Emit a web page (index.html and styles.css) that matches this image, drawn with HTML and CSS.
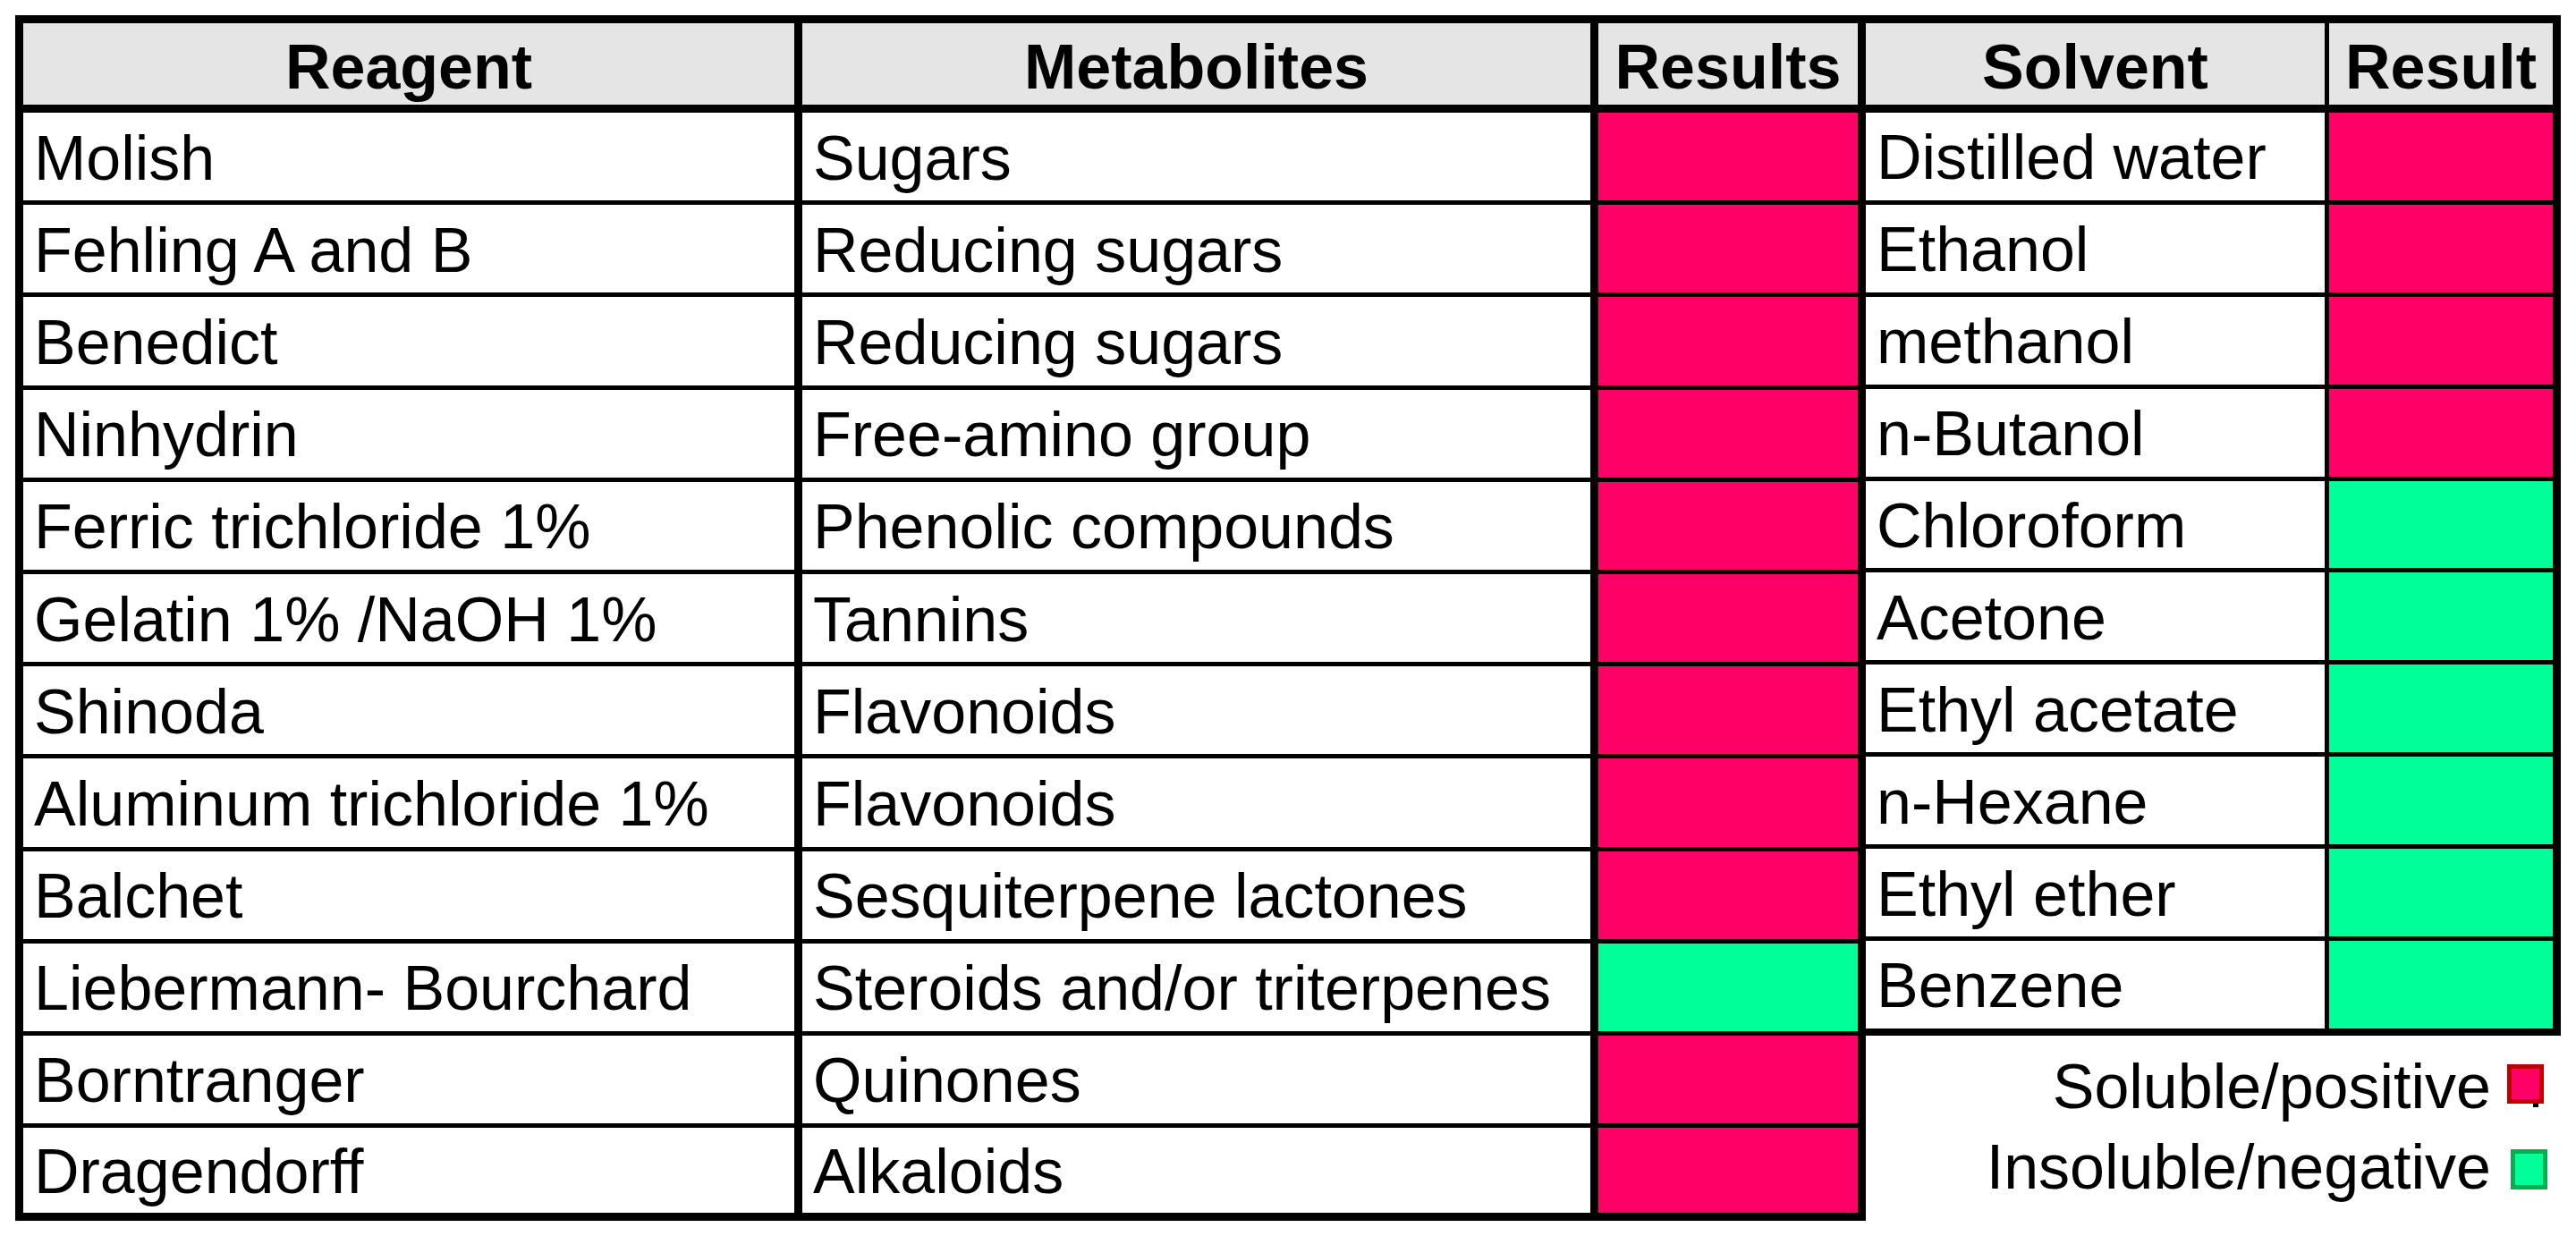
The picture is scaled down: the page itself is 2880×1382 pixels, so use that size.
FILE: index.html
```html
<!DOCTYPE html>
<html lang="en">
<head>
<meta charset="utf-8">
<title>Phytochemical screening and solubility</title>
<link rel="stylesheet" href="styles.css">
</head>
<body>
<div class="sheet">
  <div class="tests">
    <div class="hd">Reagent</div><div class="hd">Metabolites</div><div class="hd">Results</div>
    <div class="c">Molish</div><div class="c">Sugars</div><div class="c pos"></div>
    <div class="c">Fehling A and B</div><div class="c">Reducing sugars</div><div class="c pos"></div>
    <div class="c">Benedict</div><div class="c">Reducing sugars</div><div class="c pos"></div>
    <div class="c">Ninhydrin</div><div class="c">Free-amino group</div><div class="c pos"></div>
    <div class="c">Ferric trichloride 1%</div><div class="c">Phenolic compounds</div><div class="c pos"></div>
    <div class="c">Gelatin 1% /NaOH 1%</div><div class="c">Tannins</div><div class="c pos"></div>
    <div class="c">Shinoda</div><div class="c">Flavonoids</div><div class="c pos"></div>
    <div class="c">Aluminum trichloride 1%</div><div class="c">Flavonoids</div><div class="c pos"></div>
    <div class="c">Balchet</div><div class="c">Sesquiterpene lactones</div><div class="c pos"></div>
    <div class="c">Liebermann- Bourchard</div><div class="c">Steroids and/or triterpenes</div><div class="c neg"></div>
    <div class="c">Borntranger</div><div class="c">Quinones</div><div class="c pos"></div>
    <div class="c">Dragendorff</div><div class="c">Alkaloids</div><div class="c pos"></div>
  </div>
  <div class="side">
    <div class="solv">
      <div class="hd">Solvent</div><div class="hd">Result</div>
      <div class="c">Distilled water</div><div class="c pos"></div>
      <div class="c">Ethanol</div><div class="c pos"></div>
      <div class="c">methanol</div><div class="c pos"></div>
      <div class="c">n-Butanol</div><div class="c pos"></div>
      <div class="c">Chloroform</div><div class="c neg"></div>
      <div class="c">Acetone</div><div class="c neg"></div>
      <div class="c">Ethyl acetate</div><div class="c neg"></div>
      <div class="c">n-Hexane</div><div class="c neg"></div>
      <div class="c">Ethyl ether</div><div class="c neg"></div>
      <div class="c">Benzene</div><div class="c neg"></div>
    </div>
    <div class="legend">
      <div class="key"><span class="key-text">Soluble/positive</span><span class="sw sw-pos"></span></div>
      <div class="key"><span class="key-text">Insoluble/negative</span><span class="sw sw-neg"></span></div>
    </div>
  </div>
</div>
</body>
</html>
```

FILE: styles.css
```css
html, body {
  margin: 0;
  padding: 0;
  background: #ffffff;
}

body {
  font-family: "Liberation Sans", Arial, sans-serif;
  font-size: 70px;
  color: #000000;
}

.sheet {
  display: flex;
  align-items: flex-start;
  margin: 17px 0 0 17px;
}

/* ---------- shared cells ---------- */
.hd,
.c {
  box-sizing: border-box;
  display: flex;
  align-items: center;
  white-space: nowrap;
  overflow: hidden;
}

.hd {
  justify-content: center;
  font-weight: bold;
  background: #e5e5e5;
  border-bottom: 9px solid #000;
  padding-top: 7px;
}

.c {
  padding: 3px 0 0 12px;
  border-bottom: 5px solid #000;
}

.pos {
  background: #ff0066;
}

.neg {
  background: #00ff99;
}

/* ---------- reagent table ---------- */
.tests {
  display: grid;
  grid-template-columns: 871px 890px 290px;
  grid-template-rows: 100px repeat(11, 103.2px) 95px;
  border: 9px solid #000;
}

.tests > div:nth-child(3n+1),
.tests > div:nth-child(3n+2) {
  border-right: 9px solid #000;
}

.tests > div:nth-last-child(-n+3) {
  border-bottom: 0;
}

/* ---------- solvent table ---------- */
.side {
  display: flex;
  flex-direction: column;
  width: 777px;
}

.solv {
  display: grid;
  grid-template-columns: 518px 250px;
  grid-template-rows: 100px repeat(9, 102.9px) 97.9px;
  border-top: 9px solid #000;
  border-right: 9px solid #000;
  border-bottom: 8px solid #000;
}

.solv > div:nth-child(odd) {
  border-right: 5px solid #000;
}

.solv > div:nth-last-child(-n+2) {
  border-bottom: 0;
}

/* ---------- legend ---------- */
.legend {
  display: flex;
  flex-direction: column;
  gap: 10px;
  padding-top: 17px;
}

.key {
  display: flex;
  justify-content: flex-end;
  align-items: flex-start;
  height: 80px;
  line-height: 80px;
}

.sw {
  position: relative;
  box-sizing: border-box;
  width: 41px;
  border: 5px solid;
}

.sw-pos {
  height: 44px;
  margin: 15px 19px 0 18px;
  background: #ff0066;
  border-color: #c00000;
}

.sw-pos::after {
  content: "";
  position: absolute;
  left: 24px;
  top: 39px;
  width: 6px;
  height: 4px;
  background: #000;
}

.sw-neg {
  height: 45px;
  margin: 20px 15px 0 22px;
  background: #00ff99;
  border-color: #00b050;
}
```
